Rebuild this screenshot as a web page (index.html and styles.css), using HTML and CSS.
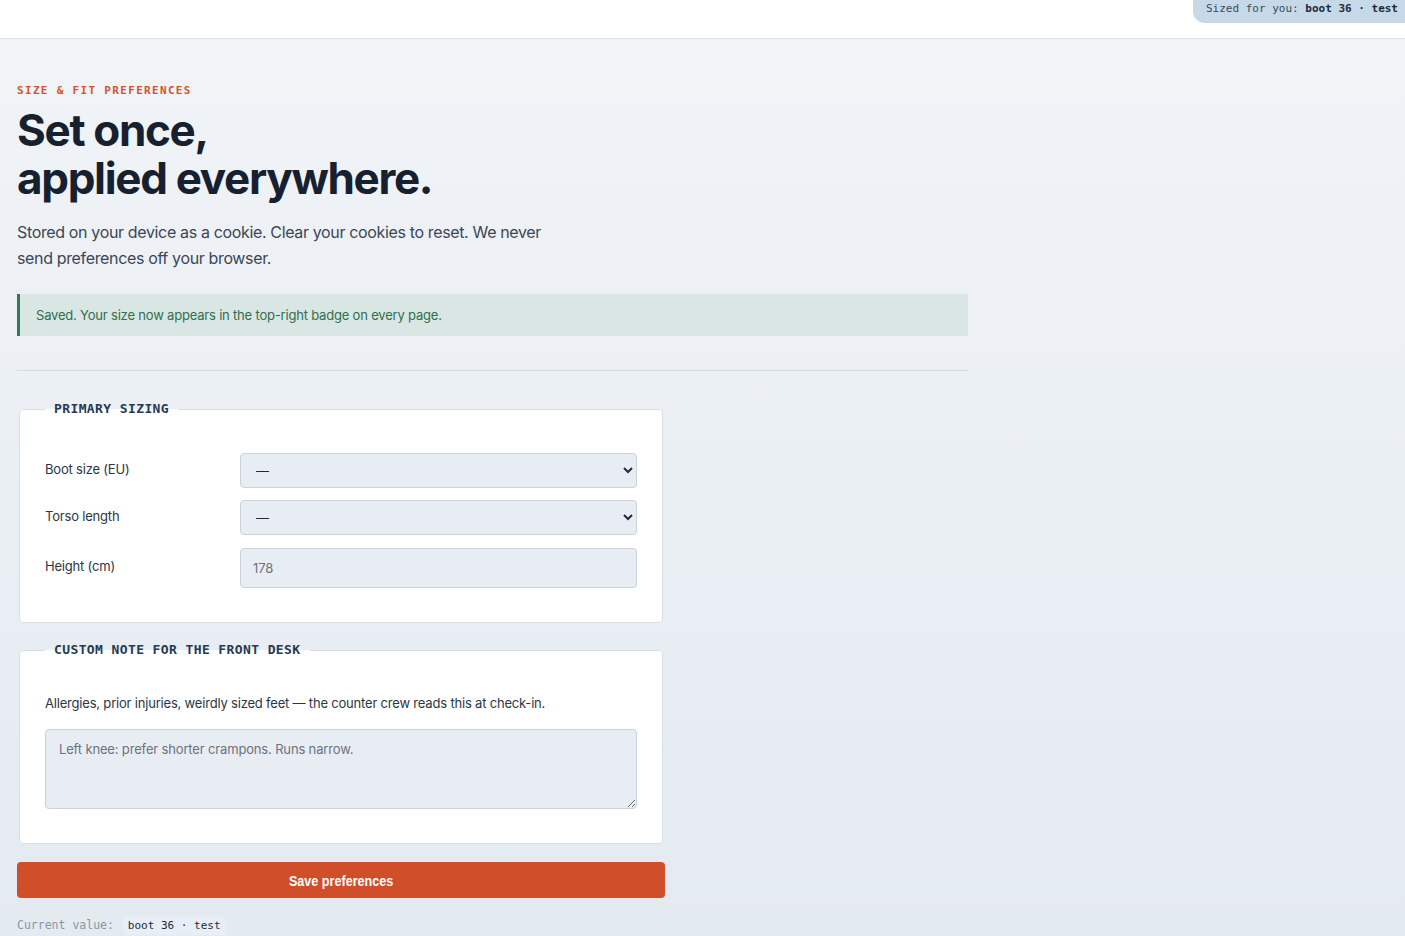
FILE: index.html
```html
<!DOCTYPE html>
<html lang="en">
<head>
  <meta charset="UTF-8">
  <meta name="viewport" content="width=device-width, initial-scale=1.0">
  <title>Size &amp; fit preferences</title>
  <link rel="stylesheet" href="styles.css">
</head>
<body>
<header class="topbar">
  <div class="size-badge">Sized for you: <b>boot 36 · test</b></div>
</header>

<main class="page">
  <div class="eyebrow">Size &amp; fit preferences</div>
  <h1>Set once,<br>applied everywhere.</h1>
  <p class="lede">Stored on your device as a cookie. Clear your cookies to reset. We never send preferences off your browser.</p>

  <div class="notice">Saved. Your size now appears in the top-right badge on every page.</div>

  <hr class="rule">

  <form class="prefs" onsubmit="return false;">
    <fieldset>
      <legend>Primary sizing</legend>
      <div class="grid">
        <label for="boot">Boot size (EU)</label>
        <select id="boot"><option>—</option></select>

        <label for="torso">Torso length</label>
        <select id="torso"><option>—</option></select>

        <label for="height">Height (cm)</label>
        <input type="text" id="height" placeholder="178">
      </div>
    </fieldset>

    <fieldset>
      <legend>Custom note for the front desk</legend>
      <p class="hint">Allergies, prior injuries, weirdly sized feet — the counter crew reads this at check-in.</p>
      <textarea placeholder="Left knee: prefer shorter crampons. Runs narrow."></textarea>
    </fieldset>

    <button type="submit" class="save"><span>Save preferences</span></button>
  </form>

  <div class="current">Current value: <code>boot 36 · test</code></div>
</main>
</body>
</html>
```

FILE: styles.css
```css
html, body {
  margin: 0;
  padding: 0;
}
body {
  font-family: Inter, "Noto Sans", sans-serif;
  letter-spacing: -0.012em;
  color: #17202e;
  background: linear-gradient(180deg, #f1f4f7 0%, #e3eaf0 100%);
  min-height: 100vh;
}
.topbar {
  height: 38px;
  background: #fff;
  border-bottom: 1px solid #dde3e8;
  position: relative;
}
.size-badge {
  position: absolute;
  top: 0;
  right: 0;
  height: 23px;
  line-height: 17px;
  padding: 0 7px 0 13px;
  background: #c6d9e8;
  border-bottom-left-radius: 12px;
  font-family: "DejaVu Sans Mono", monospace;
  font-size: 11px;
  letter-spacing: 0;
  color: #3b4a5a;
}
.size-badge b {
  color: #1e2a3a;
}
.page {
  padding: 45px 17px 0;
  max-width: 951px;
}
.eyebrow {
  font-family: "DejaVu Sans Mono", monospace;
  font-size: 11px;
  font-weight: bold;
  letter-spacing: 0.12em;
  text-transform: uppercase;
  color: #d2532e;
  line-height: 14px;
}
h1 {
  margin: 8px 0 0;
  font-size: 44px;
  line-height: 48px;
  font-weight: 700;
  letter-spacing: -0.03em;
  color: #17202e;
}
.lede {
  margin: 17px 0 0;
  max-width: 540px;
  font-size: 16px;
  line-height: 26px;
  letter-spacing: -0.022em;
  color: #3b4656;
}
.notice {
  margin-top: 23px;
  height: 42px;
  line-height: 42px;
  padding: 0 16px;
  background: #dae6e4;
  border-left: 3px solid #2f7a55;
  font-size: 13px;
  color: #2f6f4e;
}
.rule {
  margin: 34px 0 0;
  border: 0;
  border-top: 1px solid #d5dde4;
}
.prefs {
  width: 648px;
  margin-top: 30px;
}
fieldset {
  margin: 0 2px 19px;
  padding: 20px 25px 34px;
  background: #fff;
  border: 1px solid #d6dee6;
  border-radius: 4px;
}
legend {
  padding: 0 9px;
  font-family: "DejaVu Sans Mono", monospace;
  font-size: 13px;
  font-weight: bold;
  letter-spacing: 0.03em;
  text-transform: uppercase;
  color: #263a52;
  line-height: 16px;
}
.grid {
  display: grid;
  grid-template-columns: 195px 1fr;
  row-gap: 12px;
  align-items: center;
  margin-top: 16px;
}
.grid label {
  font-size: 13px;
  color: #2b3644;
  margin-top: -3px;
}
select, input, textarea {
  font-family: Inter, "Noto Sans", sans-serif;
  font-size: 13px;
  letter-spacing: -0.012em;
  background: #e8edf3;
  border: 1px solid #c9d3dd;
  border-radius: 4px;
  color: #1e2a3a;
  box-sizing: border-box;
  width: 100%;
}
select {
  height: 35px;
  padding: 0 11px;
}
input {
  height: 40px;
  padding: 0 12px;
  margin-top: 1px;
}
::placeholder {
  color: #6b7280;
}
.hint {
  margin: 15px 0 16px;
  font-size: 13px;
  line-height: 20px;
  color: #2b3644;
}
textarea {
  display: block;
  height: 80px;
  padding: 11px 13px;
  resize: vertical;
}
.save {
  display: block;
  width: 648px;
  height: 36px;
  margin: -1px 0 0;
  border: none;
  border-radius: 4px;
  background: #d04e2a;
  color: #fff;
  font-family: "Liberation Sans", Arial, sans-serif;
  font-size: 15px;
  font-weight: bold;
  letter-spacing: 0;
  cursor: pointer;
}
.save span {
  display: inline-block;
  transform: scaleX(0.84);
}
.current {
  margin-top: 20px;
  font-family: "DejaVu Sans Mono", monospace;
  font-size: 11.5px;
  letter-spacing: 0;
  color: #8a96a3;
}
.current code {
  font-family: "DejaVu Sans Mono", monospace;
  font-size: 11px;
  color: #1e2a3a;
  background: #e8eef5;
  padding: 3px 5px;
  border-radius: 3px;
  margin-left: 2px;
}
```
